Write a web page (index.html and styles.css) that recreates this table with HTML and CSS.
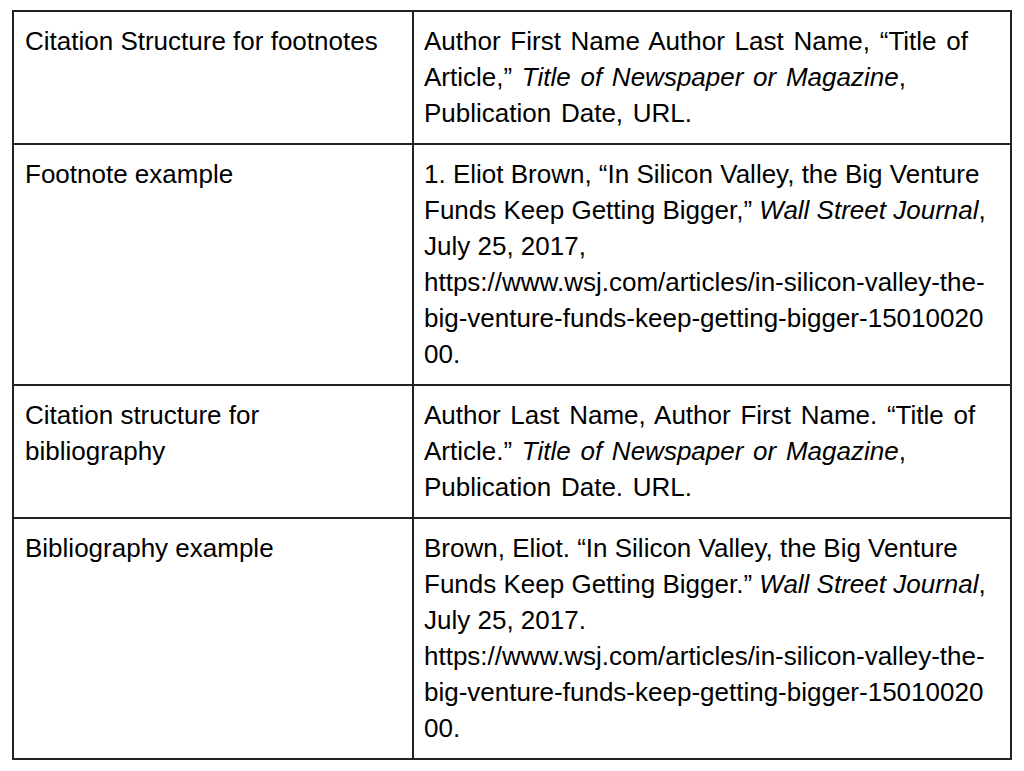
FILE: index.html
```html
<!DOCTYPE html>
<html>
<head>
<meta charset="utf-8">
<link rel="stylesheet" href="styles.css">
</head>
<body>
<div class="page">
<table class="cite">
  <tr>
    <td class="label">Citation Structure for footnotes</td>
    <td class="value structure">Author First Name Author Last Name, “Title of Article,” <em>Title of Newspaper or Magazine</em>, Publication Date, URL.</td>
  </tr>
  <tr>
    <td class="label">Footnote example</td>
    <td class="value">1. Eliot Brown, “In Silicon Valley, the Big Venture Funds Keep Getting Bigger,” <em>Wall Street Journal</em>, July 25, 2017, <span class="url">https://www.wsj.com/articles/in-silicon-valley-the-big-venture-funds-keep-getting-bigger-1501002000.</span></td>
  </tr>
  <tr>
    <td class="label">Citation structure for bibliography</td>
    <td class="value structure">Author Last Name, Author First Name. “Title of Article.” <em>Title of Newspaper or Magazine</em>, Publication Date. URL.</td>
  </tr>
  <tr>
    <td class="label">Bibliography example</td>
    <td class="value">Brown, Eliot. “In Silicon Valley, the Big Venture Funds Keep Getting Bigger.” <em>Wall Street Journal</em>, July 25, 2017. <span class="url">https://www.wsj.com/articles/in-silicon-valley-the-big-venture-funds-keep-getting-bigger-1501002000.</span></td>
  </tr>
</table>
</div>
</body>
</html>
```

FILE: styles.css
```css
html, body {
  margin: 0;
  padding: 0;
  background: #fff;
}
.page {
  padding: 10px 0 0 12px;
}
.cite {
  border-collapse: collapse;
  width: 1000px;
  table-layout: fixed;
  font-family: "Liberation Sans", Arial, sans-serif;
  font-size: 26px;
  line-height: 36px;
  color: #000;
}
.cite td {
  border: 2px solid #222;
  vertical-align: top;
  padding: 11px 11px 12px 11px;
  overflow-wrap: anywhere;
}
.cite td.label {
  width: 376px;
}
.cite td.value {
  padding-left: 10px;
  padding-right: 21px;
}
.cite td.structure {
  word-spacing: 2.5px;
}
.cite em {
  font-style: italic;
}
.url {
  display: inline-block;
  word-break: break-all;
}
```
